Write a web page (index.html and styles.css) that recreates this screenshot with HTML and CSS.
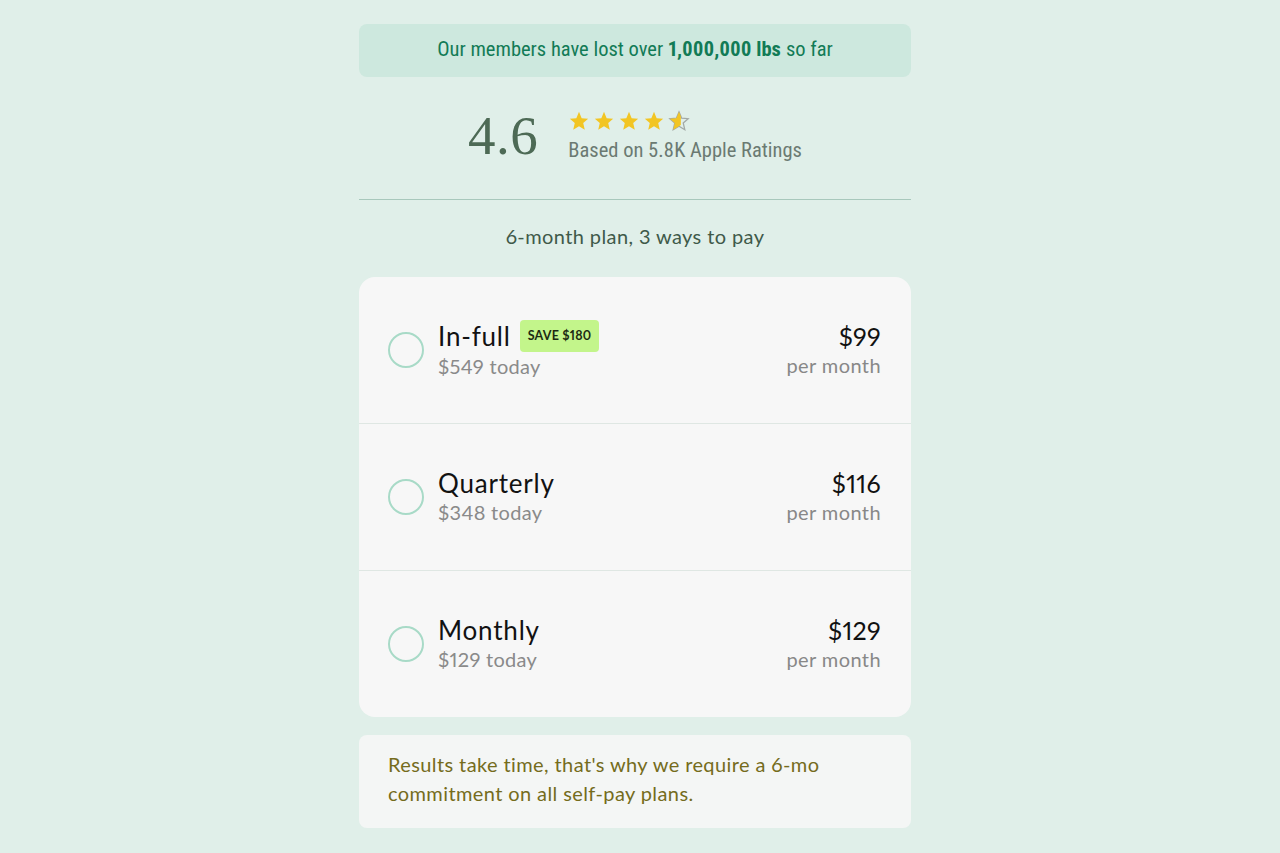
FILE: index.html
```html
<!DOCTYPE html>
<html lang="en">
<head>
<meta charset="utf-8">
<title>Plans</title>
<link rel="stylesheet" href="styles.css">
</head>
<body>
<main class="page">
  <div class="banner">Our members have lost over <b>1,000,000 lbs</b> so far</div>

  <div class="rating">
    <div class="score">4.6</div>
    <div class="rating-info">
      <div class="stars">
        <svg class="star" viewBox="0 0 24 24"><path d="M12 2l2.9 6.9 7.1.6-5.4 4.7 1.7 7.3L12 17.6 5.7 21.5l1.7-7.3L2 9.5l7.1-.6z" fill="#f2c523"/></svg>
        <svg class="star" viewBox="0 0 24 24"><path d="M12 2l2.9 6.9 7.1.6-5.4 4.7 1.7 7.3L12 17.6 5.7 21.5l1.7-7.3L2 9.5l7.1-.6z" fill="#f2c523"/></svg>
        <svg class="star" viewBox="0 0 24 24"><path d="M12 2l2.9 6.9 7.1.6-5.4 4.7 1.7 7.3L12 17.6 5.7 21.5l1.7-7.3L2 9.5l7.1-.6z" fill="#f2c523"/></svg>
        <svg class="star" viewBox="0 0 24 24"><path d="M12 2l2.9 6.9 7.1.6-5.4 4.7 1.7 7.3L12 17.6 5.7 21.5l1.7-7.3L2 9.5l7.1-.6z" fill="#f2c523"/></svg>
        <svg class="star" viewBox="0 0 24 24">
          <path d="M12 2l2.9 6.9 7.1.6-5.4 4.7 1.7 7.3L12 17.6 5.7 21.5l1.7-7.3L2 9.5l7.1-.6z" fill="none" stroke="#a3a9a6" stroke-width="1.4"/>
          <path d="M12 2L9.1 8.9 2 9.5l5.4 4.7-1.7 7.3L12 17.6 L14 16.4 V6.8z" fill="#f2c523"/>
        </svg>
      </div>
      <div class="rating-text">Based on 5.8K Apple Ratings</div>
    </div>
  </div>

  <div class="divider"></div>

  <div class="plan-title">6-month plan, 3 ways to pay</div>

  <div class="plans">
    <div class="plan">
      <span class="radio"></span>
      <div class="plan-main">
        <div class="plan-name">In-full <span class="badge">SAVE $180</span></div>
        <div class="plan-sub">$549 today</div>
      </div>
      <div class="plan-price">
        <div class="price">$99</div>
        <div class="per">per month</div>
      </div>
    </div>
    <div class="plan">
      <span class="radio"></span>
      <div class="plan-main">
        <div class="plan-name">Quarterly</div>
        <div class="plan-sub">$348 today</div>
      </div>
      <div class="plan-price">
        <div class="price">$116</div>
        <div class="per">per month</div>
      </div>
    </div>
    <div class="plan">
      <span class="radio"></span>
      <div class="plan-main">
        <div class="plan-name">Monthly</div>
        <div class="plan-sub">$129 today</div>
      </div>
      <div class="plan-price">
        <div class="price">$129</div>
        <div class="per">per month</div>
      </div>
    </div>
  </div>

  <div class="note">Results take time, that's why we require a 6-mo commitment on all self-pay plans.</div>
</main>
</body>
</html>
```
FILE: styles.css
```css
html, body {
  margin: 0;
  padding: 0;
  background: #e0efe9;
  height: 100%;
}
body {
  font-family: Lato, "Noto Sans", sans-serif;
  font-variant-numeric: proportional-nums;
  display: flex;
  justify-content: center;
  padding-right: 10px;
  box-sizing: border-box;
  overflow: hidden;
}
.page {
  width: 552px;
  padding-top: 24px;
  display: flex;
  flex-direction: column;
}
.banner {
  background: #cde8de;
  border-radius: 8px;
  height: 53px;
  display: flex;
  align-items: center;
  justify-content: center;
  font-family: "Roboto Condensed", Roboto, "Liberation Sans", sans-serif;
  font-stretch: 82%;
  font-size: 20.5px;
  color: #127b56;
  padding-bottom: 4px;
  box-sizing: border-box;
}
.banner b {
  font-weight: 700;
  margin: 0 5px;
}
.rating {
  display: flex;
  justify-content: center;
  align-items: center;
  gap: 30px;
  height: 114px;
  padding-left: 0;
  box-sizing: border-box;
}
.score {
  font-family: "Liberation Serif", serif;
  font-size: 55px;
  color: #4d6a55;
  letter-spacing: 0.5px;
  padding-top: 2px;
}
.rating-info {
  display: flex;
  flex-direction: column;
  gap: 6px;
  padding-top: 3px;
}
.stars {
  display: flex;
  gap: 3px;
}
.star {
  width: 22px;
  height: 22px;
  display: block;
}
.rating-text {
  font-family: "Roboto Condensed", Roboto, "Liberation Sans", sans-serif;
  font-stretch: 82%;
  font-size: 20.5px;
  color: #6b7a72;
}
.divider {
  height: 1px;
  background: #a8c8bc;
  margin-top: 8px;
}
.plan-title {
  text-align: center;
  font-size: 20px;
  letter-spacing: 0.4px;
  color: #3f5a49;
  height: 77px;
  line-height: 73px;
}
.plans {
  background: #f7f7f7;
  border-radius: 16px;
  overflow: hidden;
}
.plan {
  height: 146px;
  display: flex;
  align-items: center;
  padding: 0 30px 0 29px;
  border-top: 1px solid #dfe7e3;
}
.plan:first-child {
  border-top: none;
}
.radio {
  width: 32px;
  height: 32px;
  border: 2px solid #a8dac7;
  border-radius: 50%;
  flex: none;
  margin-right: 14px;
}
.plan-main {
  flex: 1;
  display: flex;
  flex-direction: column;
  gap: 2px;
  padding-bottom: 3px;
}
.plan-name {
  font-size: 26px;
  letter-spacing: 0.8px;
  color: #121212;
  display: flex;
  align-items: center;
  gap: 9px;
  line-height: 30px;
}
.badge {
  background: #c3f58b;
  color: #1c2a12;
  font-size: 12.5px;
  font-weight: 700;
  border-radius: 4px;
  padding: 0 8px;
  height: 32px;
  line-height: 32px;
  letter-spacing: 0.2px;
}
.plan-sub {
  font-size: 20px;
  letter-spacing: 0.3px;
  color: #8a8a8a;
}
.plan-price {
  text-align: right;
  display: flex;
  flex-direction: column;
  gap: 2px;
  padding-bottom: 3px;
}
.price {
  font-size: 25px;
  letter-spacing: 0.3px;
  color: #111;
  line-height: 30px;
}
.per {
  font-size: 20px;
  letter-spacing: 0.4px;
  color: #888;
}
.note {
  margin-top: 18px;
  background: #f4f6f5;
  border-radius: 8px;
  padding: 15px 29px 20px;
  font-size: 20px;
  letter-spacing: 0.4px;
  line-height: 29px;
  color: #756c1c;
}
```
